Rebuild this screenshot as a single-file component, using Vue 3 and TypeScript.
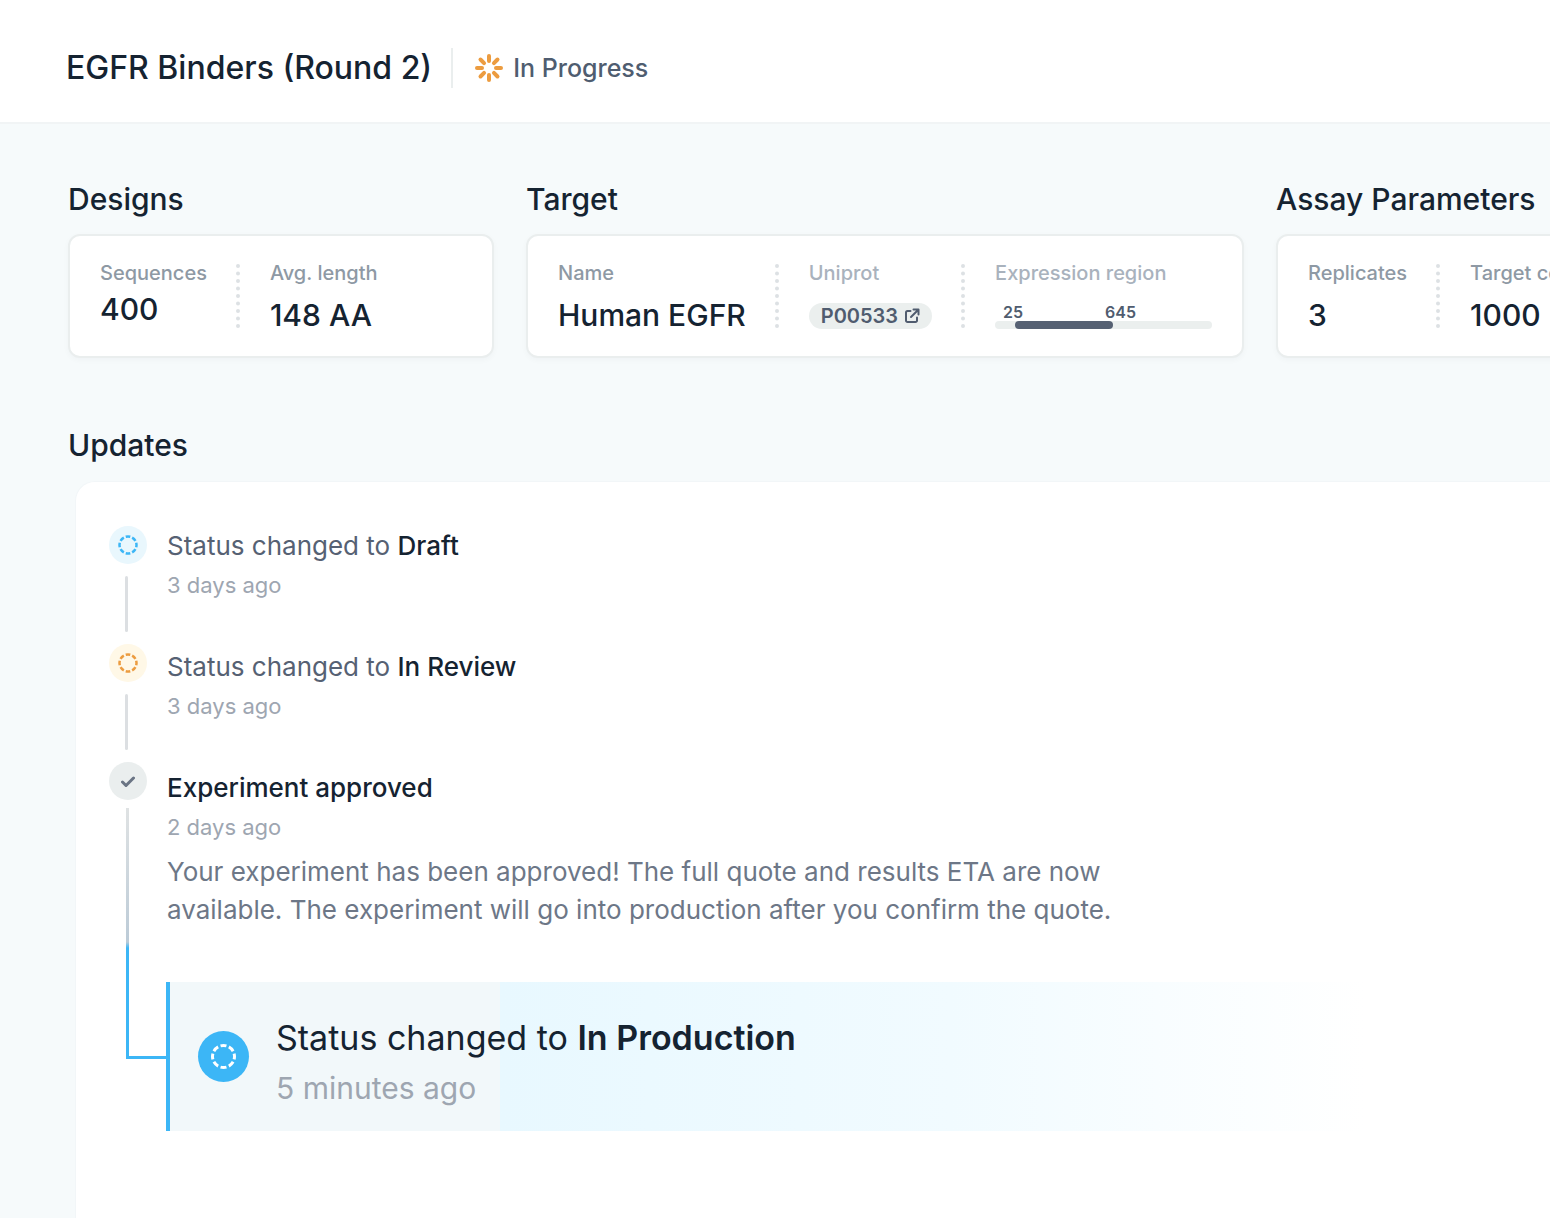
<script setup lang="ts">
interface TimelineEntry {
  prefix: string
  status: string
  time: string
  body?: string
}

const entries: TimelineEntry[] = [
  { prefix: 'Status changed to ', status: 'Draft', time: '3 days ago' },
  { prefix: 'Status changed to ', status: 'In Review', time: '3 days ago' },
  {
    prefix: '',
    status: 'Experiment approved',
    time: '2 days ago',
    body: 'Your experiment has been approved! The full quote and results ETA are now available. The experiment will go into production after you confirm the quote.',
  },
]

const spokes = [0, 45, 90, 135, 180, 225, 270, 315]
</script>

<template>
  <div class="page">
    <header class="topbar">
      <h1 class="title">EGFR Binders (Round 2)</h1>
      <span class="rule"></span>
      <svg class="burst" viewBox="0 0 28 28" aria-hidden="true">
        <rect v-for="a in spokes" :key="a" x="12" y="0" width="4" height="9" rx="2" :transform="`rotate(${a} 14 14)`" />
      </svg>
      <span class="state">In Progress</span>
    </header>

    <main class="main">
      <div class="summary">
        <section class="group designs">
          <h2 class="heading">Designs</h2>
          <dl class="card">
            <div class="field raised">
              <dt>Sequences</dt>
              <dd>400</dd>
            </div>
            <span class="dots"></span>
            <div class="field">
              <dt>Avg. length</dt>
              <dd>148 AA</dd>
            </div>
          </dl>
        </section>

        <section class="group target">
          <h2 class="heading">Target</h2>
          <dl class="card">
            <div class="field">
              <dt>Name</dt>
              <dd>Human EGFR</dd>
            </div>
            <span class="dots"></span>
            <div class="field">
              <dt class="soft">Uniprot</dt>
              <dd class="pill-row">
                <a class="pill" href="#P00533">P00533
                  <svg viewBox="0 0 16 16" aria-hidden="true">
                    <path d="M6.500 3H3.500A1.500 1.500 0 0 0 2 4.500V12.500A1.500 1.500 0 0 0 3.500 14H11.500A1.500 1.500 0 0 0 13 12.500V9.500M9.500 1.500H14.500V6.500M14 2L7 9" />
                  </svg>
                </a>
              </dd>
            </div>
            <span class="dots"></span>
            <div class="field region">
              <dt class="soft">Expression region</dt>
              <dd class="range">
                <div class="range-labels"><span>25</span><span>645</span></div>
                <div class="track"><span class="fill"></span></div>
              </dd>
            </div>
          </dl>
        </section>

        <section class="group assay">
          <h2 class="heading">Assay Parameters</h2>
          <dl class="card">
            <div class="field">
              <dt>Replicates</dt>
              <dd>3</dd>
            </div>
            <span class="dots"></span>
            <div class="field">
              <dt>Target concentration</dt>
              <dd>1000 nM</dd>
            </div>
          </dl>
        </section>
      </div>

      <h2 class="heading updates">Updates</h2>
      <section class="panel">
        <div class="rail">
          <span class="node blue">
            <svg viewBox="0 0 20 20" aria-hidden="true"><circle cx="10" cy="10" r="8.500" pathLength="80" /></svg>
          </span>
          <span class="link"></span>
          <span class="node amber">
            <svg viewBox="0 0 20 20" aria-hidden="true"><circle cx="10" cy="10" r="8.500" pathLength="80" /></svg>
          </span>
          <span class="link"></span>
          <span class="node grey">
            <svg class="check" viewBox="0 0 14 11" aria-hidden="true"><path d="M1.500 6L5 9.500L12.500 2" /></svg>
          </span>
          <span class="elbow"></span>
        </div>
        <div class="feed">
          <article v-for="(entry, i) in entries" :key="i" class="entry">
            <p class="event">{{ entry.prefix }}<strong>{{ entry.status }}</strong></p>
            <p class="time">{{ entry.time }}</p>
            <p v-if="entry.body" class="body">{{ entry.body }}</p>
          </article>
          <article class="current">
            <span class="node solid">
              <svg viewBox="0 0 25 25" aria-hidden="true"><circle cx="12.500" cy="12.500" r="11" pathLength="80" /></svg>
            </span>
            <div class="current-text">
              <p class="current-event">Status changed to <strong>In Production</strong></p>
              <p class="current-time">5 minutes ago</p>
            </div>
          </article>
        </div>
      </section>
    </main>
  </div>
</template>

<style>
body {
  background: #f6fafb;
}
</style>

<style scoped>
.page {
  display: flex;
  flex-direction: column;
  min-height: 100vh;
  overflow: hidden;
  background: #f6fafb;
  color: #152331;
  font-family: Inter, "Liberation Sans", sans-serif;
}

h1, h2, p, dl, dd {
  margin: 0;
}

.topbar {
  display: flex;
  align-items: center;
  padding: 48px 66px 34px;
  border-bottom: 2px solid #f1f4f5;
  background: #fff;
}

.title {
  font-size: 32px;
  line-height: 40px;
  font-weight: 500;
  white-space: nowrap;
}

.rule {
  width: 2px;
  height: 40px;
  margin: 0 22px 0 19px;
  background: #eaeeee;
}

.burst {
  width: 28px;
  height: 28px;
  margin-right: 10px;
  fill: #ec9c40;
}

.state {
  color: #4f5d70;
  font-size: 25px;
  line-height: 40px;
  font-weight: 500;
}

.main {
  display: flex;
  flex: 1;
  flex-direction: column;
  padding: 55px 0 0 68px;
}

.summary {
  display: flex;
  gap: 32px;
}

.group {
  flex: none;
}

.designs {
  width: 426px;
}

.target {
  width: 718px;
}

.heading {
  font-size: 30px;
  line-height: 40px;
  font-weight: 500;
  white-space: nowrap;
}

.card {
  display: flex;
  align-items: center;
  height: 124px;
  margin-top: 15px;
  padding: 0 30px;
  box-sizing: border-box;
  border: 2px solid #eaeeee;
  border-radius: 12px;
  background: #fff;
  box-shadow: 0 2px 6px rgba(20, 40, 60, 0.03);
}

.field {
  height: 76px;
  white-space: nowrap;
}

.field dt {
  color: #8e99a4;
  font-size: 20px;
  line-height: 30px;
  font-weight: 500;
}

.field dt.soft {
  color: #a9b2bd;
}

.field dd {
  margin-top: 7px;
  font-size: 30px;
  line-height: 40px;
  font-weight: 500;
}

.field.raised dd {
  margin-top: 1px;
}

.dots {
  height: 64px;
  margin: 0 30px 0 29px;
  border-left: 4px dotted #dde1e4;
}

.field .pill-row {
  display: flex;
  align-items: center;
  margin-top: 15px;
  line-height: 26px;
}

.pill {
  display: flex;
  align-items: center;
  gap: 6px;
  height: 26px;
  padding: 0 12px;
  border-radius: 13px;
  background: #ebefee;
  color: #505c6f;
  font-size: 20px;
  font-weight: 600;
  text-decoration: none;
}

.pill svg {
  width: 16px;
  height: 16px;
  fill: none;
  stroke: #505c6f;
  stroke-width: 2;
  stroke-linecap: round;
  stroke-linejoin: round;
}

.region {
  flex: 1;
}

.field .range {
  margin-top: 15px;
  font-size: 16px;
  line-height: 18px;
  font-weight: 600;
  color: #505c6f;
}

.range-labels {
  display: flex;
  gap: 82px;
  padding-left: 8px;
}

.track {
  display: flex;
  height: 8px;
  border-radius: 4px;
  background: #ebefee;
}

.fill {
  width: 98px;
  margin-left: 20px;
  border-radius: 4px;
  background: #566173;
}

.updates {
  margin-top: 67px;
}

.panel {
  display: flex;
  flex: 1;
  margin: 16px 0 0 7px;
  padding: 44px 0 86px 33px;
  border: solid #f2f6f8;
  border-width: 1px 0 0 1px;
  border-radius: 20px 0 0 0;
  background: #fff;
}

.rail {
  display: flex;
  flex: none;
  flex-direction: column;
  width: 57px;
}

.node {
  display: flex;
  flex: none;
  align-items: center;
  justify-content: center;
  width: 38px;
  height: 38px;
  border-radius: 50%;
}

.node svg {
  width: 20px;
  height: 20px;
  fill: none;
  stroke: currentColor;
  stroke-width: 2.5;
  stroke-dasharray: 7 3;
  stroke-dashoffset: 3.5;
}

.blue {
  background: #e9f7fd;
  color: #3cb6f6;
}

.amber {
  background: #fff8e7;
  color: #ec9c40;
}

.grey {
  background: #eaeeee;
  color: #6a7484;
}

.node .check {
  width: 14px;
  height: 11px;
  stroke-width: 3;
  stroke-dasharray: none;
  stroke-linecap: round;
}

.link {
  width: 3px;
  height: 56px;
  margin: 12px 0 12px 16px;
  border-radius: 2px;
  background: #dcdfe2;
}

.elbow {
  width: 40px;
  height: 251px;
  margin: 8px 0 0 17px;
  box-sizing: border-box;
  border: solid transparent;
  border-width: 0 0 3px 3px;
  border-image: linear-gradient(#dfe2e3 0, #bccbd7 134px, #3cb6f6 140px) 0 0 3 3;
}

.feed {
  flex: 1;
  min-width: 0;
}

.entry {
  padding: 0 0 1px 1px;
  margin-bottom: 41px;
}

.entry:nth-child(3) {
  margin-bottom: 52px;
}

.event {
  color: #566173;
  font-size: 26px;
  line-height: 40px;
}

.event strong {
  color: #152331;
  font-weight: 500;
}

.time {
  color: #9ea6b1;
  font-size: 22px;
  line-height: 39px;
}

.body {
  max-width: 960px;
  margin-top: 6px;
  color: #6d7787;
  font-size: 26px;
  line-height: 38px;
}

.current {
  display: flex;
  align-items: center;
  gap: 27px;
  height: 149px;
  max-width: 1200px;
  padding-left: 28px;
  box-sizing: border-box;
  border-left: 4px solid #3cb6f6;
  background: linear-gradient(90deg, #f2f8fa 330px, #e8f8ff 330px, #f1fbff 780px, #fff 100%);
}

.solid {
  width: 51px;
  height: 51px;
  background: #3cb6f6;
  color: #fff;
}

.solid svg {
  width: 25px;
  height: 25px;
  stroke-width: 3;
}

.current-text {
  margin-top: 12px;
}

.current-event {
  font-size: 34px;
  line-height: 50px;
}

.current-event strong {
  font-weight: 600;
}

.current-time {
  color: #9ea6b1;
  font-size: 30px;
  line-height: 50px;
}
</style>
